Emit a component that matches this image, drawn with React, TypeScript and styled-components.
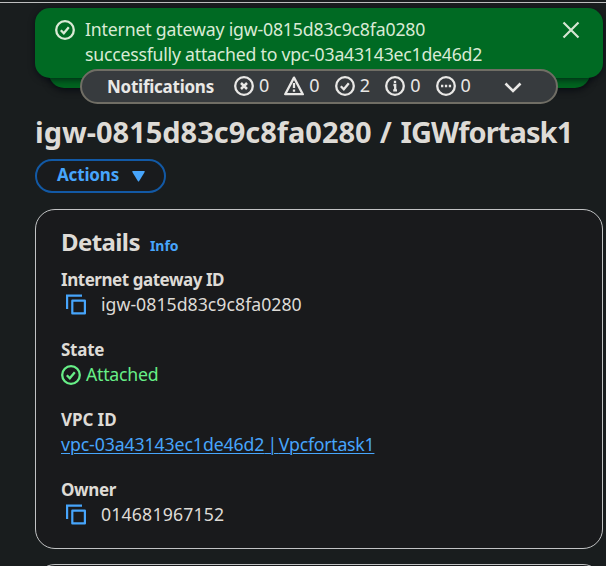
import React from 'react';
import styled, { createGlobalStyle } from 'styled-components';

const GlobalStyle = createGlobalStyle`
  * { box-sizing: border-box; }
  body {
    margin: 0;
    background: #191d1e;
    color: #dedbd6;
    font: 17px/25px 'Noto Sans', 'Open Sans', sans-serif;
    overflow: hidden;
  }
`;

const Page = styled.main`
  height: 566px;
  overflow: hidden;
  padding: 2px 3px 0 35px;
  background: linear-gradient(#191d1e 2px, #bebfbf 2px, #bebfbf 3px, #191d1e 3px);
`;

const Text = styled.span<{ $track?: number }>`
  letter-spacing: ${(p) => p.$track ?? 0}px;
  white-space: pre;
`;

const FlashStack = styled.section`
  position: relative;
  height: 103px;
  padding-top: 6px;
`;

const FlashBehind = styled.div`
  position: absolute;
  top: 40px;
  left: 14px;
  right: 13px;
  height: 46px;
  border-radius: 15px;
  background: #00641f;
  box-shadow: 0 2px 7px rgba(0, 5, 12, 0.75);
`;

const Flash = styled.div`
  position: relative;
  display: flex;
  height: 70px;
  padding: 9px 22px 0 20px;
  border-radius: 15px;
  background: #006a23;
  color: #d9ead5;
  box-shadow: 0 2px 6px rgba(0, 7, 16, 0.6);
`;

const FlashIcon = styled.div`
  flex: 0 0 30px;
  padding-top: 3px;
  line-height: 0;
`;

const FlashMessage = styled.div`
  flex: 1;
  display: flex;
  flex-direction: column;
  font-size: 17.7px;
`;

const CloseButton = styled.button`
  align-self: flex-start;
  margin-top: 4px;
  padding: 0;
  border: 0;
  background: none;
  color: #d5e5d2;
  line-height: 0;
`;

const NotificationBar = styled.div`
  position: absolute;
  top: 67px;
  left: 45px;
  display: flex;
  align-items: center;
  width: 478px;
  height: 35px;
  padding: 0 0 1px 25px;
  border: 2px solid #706e65;
  border-radius: 18px;
  background: #373b3e;
  color: #e9e8e6;
  font-weight: 700;
`;

const Counters = styled.div`
  display: flex;
  gap: 5px;
  margin-left: 20px;
`;

const Counter = styled.div`
  display: flex;
  align-items: center;
  gap: 5px;
  width: 45.4px;
  font-size: 18px;
  font-weight: 400;
  line-height: 22px;

  svg { flex: none; }
`;

const Count = styled.span`
  margin-top: -2px;
`;

const Expand = styled.div`
  margin: 3px 0 0 23px;
  line-height: 0;
`;

const Title = styled.h1`
  margin: 9px 0 0;
  font-size: 29px;
  line-height: 36px;
`;

const ActionsButton = styled.button`
  display: flex;
  align-items: center;
  gap: 13px;
  width: 131px;
  height: 34px;
  margin: 9px 0 16px;
  padding: 0 0 2px 20px;
  border: 2px solid #1259a5;
  border-radius: 17px;
  background: #191b1d;
  color: #47a5fb;
  font: 700 17px/26px 'Noto Sans', sans-serif;

  svg { margin-top: 3px; }
`;

const Card = styled.section`
  height: 340px;
  margin-bottom: 15px;
  padding: 15px 25px;
  border: 1px solid #c1c3c4;
  border-radius: 20px;
  background: #191a1c;
`;

const CardHeader = styled.header`
  display: flex;
  align-items: baseline;
  gap: 10px;
  height: 42px;
  line-height: 34px;
`;

const CardTitle = styled.h2`
  margin: 0;
  font-size: 24px;
`;

const InfoLink = styled.a`
  color: #47a5fb;
  font-size: 14px;
  font-weight: 700;
`;

const Fields = styled.dl`
  display: flex;
  flex-direction: column;
  gap: 20px;
  margin: 0;
`;

const Label = styled.dt`
  font-weight: 700;
`;

const Value = styled.dd<{ $kind?: 'copy' | 'status' }>`
  display: flex;
  align-items: center;
  gap: ${(p) => (p.$kind === 'copy' ? 14 : 5)}px;
  height: 25px;
  margin: 0;
  padding-left: ${(p) => (p.$kind === 'copy' ? 5 : 0)}px;
  color: ${(p) => (p.$kind === 'status' ? '#67ef87' : 'inherit')};
  font-size: 17.7px;
`;

const ResourceLink = styled.a`
  color: #47a5fb;
  text-decoration: underline;
  text-decoration-thickness: 1px;
  text-underline-offset: 2px;
  white-space: nowrap;
`;

type Status = 'error' | 'warning' | 'success' | 'info' | 'progress';

const marks: Record<Status, React.ReactNode> = {
  error: <path d="m7 7 6 6m0-6-6 6" strokeWidth="2.5" />,
  warning: <path d="M10 7v5m0 1.6v2.2" />,
  success: <path d="m5.8 10.2 3 3 5-6" />,
  info: <path d="M10 4.8v2.2M8.4 9h1.8v5.6M8.2 14.4h3.8" />,
  progress: <path d="M5 10h2.3m1.6 0h2.3m1.6 0h2.3" strokeWidth="2.5" />,
};

const StatusIcon = ({ status }: { status: Status }) => (
  <svg width="20" height="20" viewBox="0 0 20 20" fill="none" stroke="currentColor" strokeWidth="2.3">
    {status === 'warning' ? (
      <path d="M10 1.6 18.8 18.2H1.2Z" strokeLinejoin="round" />
    ) : (
      <circle cx="10" cy="10" r="8.8" />
    )}
    {marks[status]}
  </svg>
);

const CopyIcon = () => (
  <svg width="21" height="21" viewBox="0 0 21 21" fill="none" stroke="#47a5fb" strokeWidth="2.2">
    <path d="M1.1 15V1.6H16" />
    <path d="M6.3 6.7h12.6v12.7H6.3Z" strokeLinejoin="round" />
  </svg>
);

const counts: [Status, number][] = [
  ['error', 0],
  ['warning', 0],
  ['success', 2],
  ['info', 0],
  ['progress', 0],
];

export default function App() {
  return (
    <>
      <GlobalStyle />
      <Page>
        <FlashStack>
          <FlashBehind />
          <Flash>
            <FlashIcon><StatusIcon status="success" /></FlashIcon>
            <FlashMessage>
              <Text $track={-0.18}>Internet gateway igw-0815d83c9c8fa0280</Text>
              <Text $track={-0.23}>successfully attached to vpc-03a43143ec1de46d2</Text>
            </FlashMessage>
            <CloseButton aria-label="Dismiss">
              <svg width="20" height="18" viewBox="0 0 20 18" fill="none" stroke="currentColor" strokeWidth="2.2">
                <path d="m2.5 1.5 15 15m0-15-15 15" />
              </svg>
            </CloseButton>
          </Flash>
          <NotificationBar>
            <Text $track={-0.25}>Notifications</Text>
            <Counters>
              {counts.map(([status, count]) => (
                <Counter key={status}>
                  <StatusIcon status={status} />
                  <Count>{count}</Count>
                </Counter>
              ))}
            </Counters>
            <Expand>
              <svg width="18" height="11" viewBox="0 0 18 11" fill="none" stroke="currentColor" strokeWidth="2.6">
                <path d="m1.5 1.5 7.5 7.5 7.5-7.5" />
              </svg>
            </Expand>
          </NotificationBar>
        </FlashStack>

        <Title>
          <Text $track={-0.02}>igw-0815d83c9c8fa0280</Text>
          <Text $track={0.6}>{' / '}</Text>
          <Text $track={-0.9}>IGWfortask1</Text>
        </Title>
        <ActionsButton>
          <Text $track={-0.17}>Actions</Text>
          <svg width="13" height="11" viewBox="0 0 13 11" fill="currentColor">
            <path d="M1 0h11q1.3 0 .7 1L7.2 10q-.7 1-1.4 0L.3 1Q-.3 0 1 0Z" />
          </svg>
        </ActionsButton>

        <Card>
          <CardHeader>
            <CardTitle><Text $track={-0.6}>Details</Text></CardTitle>
            <InfoLink>Info</InfoLink>
          </CardHeader>
          <Fields>
            <div>
              <Label><Text $track={-0.46}>Internet gateway ID</Text></Label>
              <Value $kind="copy"><CopyIcon /><Text $track={0.02}>igw-0815d83c9c8fa0280</Text></Value>
            </div>
            <div>
              <Label><Text $track={-0.25}>State</Text></Label>
              <Value $kind="status"><StatusIcon status="success" /><Text $track={-0.25}>Attached</Text></Value>
            </div>
            <div>
              <Label><Text $track={-0.08}>VPC ID</Text></Label>
              <Value>
                <ResourceLink>
                  <Text $track={-0.1}>vpc-03a43143ec1de46d2</Text>
                  <Text $track={-1.5}>{' | '}</Text>
                  <Text $track={-0.24}>Vpcfortask1</Text>
                </ResourceLink>
              </Value>
            </div>
            <div>
              <Label><Text $track={-0.36}>Owner</Text></Label>
              <Value $kind="copy"><CopyIcon /><Text $track={0.16}>014681967152</Text></Value>
            </div>
          </Fields>
        </Card>
        <Card />
      </Page>
    </>
  );
}
